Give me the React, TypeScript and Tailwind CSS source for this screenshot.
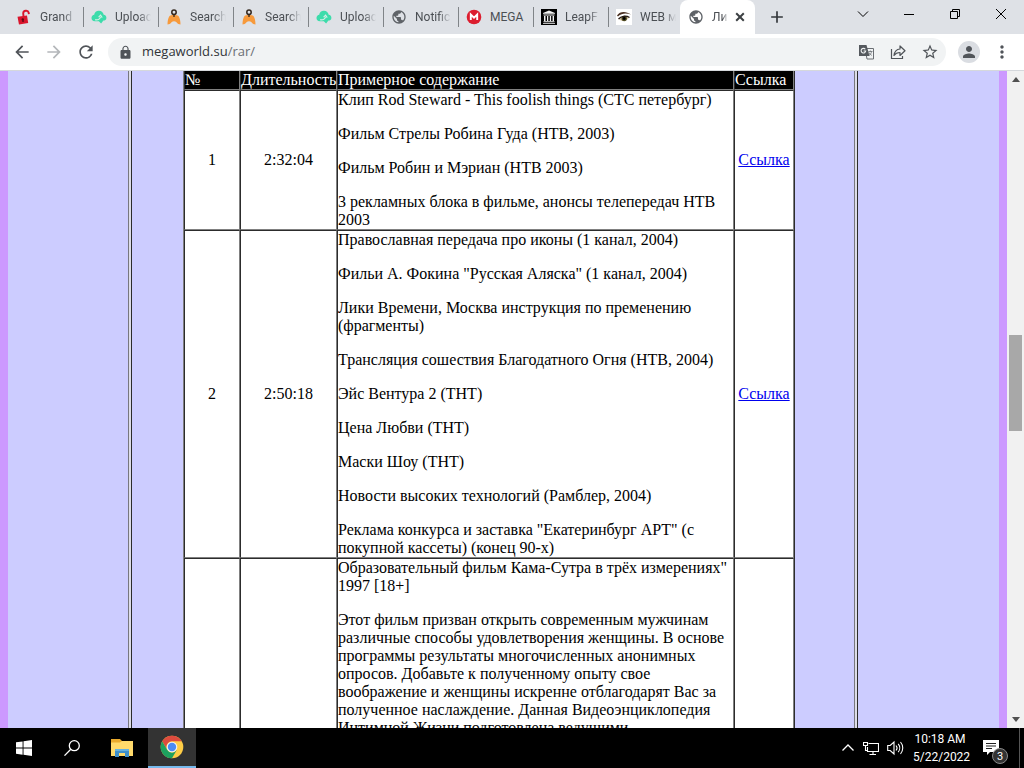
import React from "react";
import {
  MdArrowBack,
  MdArrowForward,
  MdRefresh,
  MdLock,
  MdStarBorder,
  MdPerson,
  MdMoreVert,
  MdPublic,
  MdAdd,
} from "react-icons/md";

const LockIcon = () => (
  <svg viewBox="0 0 16 16" className="h-4 w-4 shrink-0">
    <path d="M7.500 7.500 7.200 4.200C7.300 1.300 12 .8 12.600 3.500l.3 1.700" fill="none" stroke="#d9152c" strokeWidth="1.900" />
    <path d="M1.500 7.800 11 6.600l1.200 7.400-9.200 1.400z" fill="#d9152c" />
    <circle cx="6.800" cy="10.400" r="1.200" fill="#5c0a14" />
    <path d="M6.400 10.600h1l.4 2.400H6.300z" fill="#5c0a14" />
  </svg>
);

const CloudIcon = () => (
  <svg viewBox="0 0 16 16" className="h-4 w-4 shrink-0">
    <path d="M4 12.300C1.600 12.300 0.500 10.800 0.500 9c0-1.800 1.300-3 2.700-3.200C3.600 3 5.800 1.600 8 1.800c2.600.1 4.300 1.700 4.700 3.900 1.700.2 2.800 1.500 2.700 3.200-.1 1.700-1.400 2.700-3 2.700l-2.300 3-2.300-2.300z" fill="#3ddcab" />
    <path d="M4 10.800c3 .3 5-.8 5.500-3M7.600 8.200l2-2 1.600 2.400" fill="none" stroke="#d5efe6" strokeWidth="1.100" />
  </svg>
);

const PersonIcon = () => (
  <svg viewBox="0 0 16 16" className="h-4 w-4 shrink-0">
    <path d="M3.500 7C5 5.600 11 5.600 12.500 7c1.400 2.200 2 5 2 8.500-1.500 0-3-.8-4-2.200-1.500-1.300-3.500-1.300-5 0-1 1.400-2.500 2.200-4 2.200 0-3.500.6-6.300 2-8.500z" fill="#f79a3c" />
    <circle cx="8" cy="3.300" r="2.200" fill="#dee1e6" stroke="#33261c" strokeWidth="1.500" />
    <path d="M8 5.500v2.500" stroke="#33261c" strokeWidth="1.300" />
  </svg>
);

const GlobeIcon = () => <MdPublic className="h-4 w-4 shrink-0 text-[#5f6368]" />;

const MegaIcon = () => (
  <svg viewBox="0 0 16 16" className="h-4 w-4 shrink-0">
    <circle cx="8" cy="8" r="7.300" fill="#dc1d2f" />
    <path d="M4.800 11V5.500L8 8.600l3.200-3.100V11" fill="none" stroke="#fff" strokeWidth="1.900" />
  </svg>
);

const ArchiveIcon = () => (
  <svg viewBox="0 0 16 16" className="h-4 w-4 shrink-0">
    <path d="M0 0h16v16H0z" fill="#000" />
    <path d="M2 4 8 1.500 14 4v.8H2zM2.500 5.500h11v1h-11zM3 7h1.500v5H3zM6 7h1.300v5H6zM8.800 7h1.300v5H8.800zM11.600 7H13v5h-1.400zM2.500 12.300h11v.9h-11zM2 13.900h12v.8H2z" fill="#f3f3f3" />
  </svg>
);

const EyeIcon = () => (
  <svg viewBox="0 0 16 16" className="h-4 w-4 shrink-0">
    <path d="M0 0h16v16H0z" fill="#fff" />
    <path d="M1 6.500C4 2 10 2 15 5.500c-5-1.500-9-1.500-13 2z" fill="#4a3022" />
    <path d="M3 10C5 7 10 6.300 13 8.500c-2 3.500-7 5-10 1.500z" fill="#d9c8a8" />
    <circle cx="8.200" cy="9.500" r="2.700" fill="#4d4821" />
    <circle cx="8.200" cy="9.500" r="1.400" fill="#000" />
    <path d="M2.500 10C5 7 10 6.300 13.500 8.500" fill="none" stroke="#241812" strokeWidth="1.200" />
  </svg>
);

const tabs = [
  { title: "Grand", Icon: LockIcon },
  { title: "Uploac", Icon: CloudIcon },
  { title: "Search", Icon: PersonIcon },
  { title: "Search", Icon: PersonIcon },
  { title: "Uploac", Icon: CloudIcon },
  { title: "Notific", Icon: GlobeIcon },
  { title: "MEGA", Icon: MegaIcon },
  { title: "LeapF", Icon: ArchiveIcon },
  { title: "WEB м", Icon: EyeIcon },
];

const fade = "[mask-image:linear-gradient(to_right,black_65%,transparent)]";

function TabStrip() {
  return (
    <header className="flex h-[34px] shrink-0 bg-[#dee1e6] font-['Roboto',sans-serif] text-xs text-[#4b4f54]">
      <nav className="flex items-center pl-[9px]">
        {tabs.map(({ title, Icon }, i) => (
          <a
            key={i}
            href="#"
            className={
              "flex h-5 w-[75px] items-center gap-2 pl-[7px] " +
              (i < tabs.length - 1 ? "border-r border-[#808488]" : "")
            }
          >
            <Icon />
            <span className={"w-9 shrink-0 whitespace-nowrap " + (title === "MEGA" ? "" : fade)}>{title}</span>
          </a>
        ))}
      </nav>
      <div className="-ml-1 flex w-[75px] items-center rounded-t-lg bg-white pl-2">
        <GlobeIcon />
        <span className={"ml-2 w-4 shrink-0 whitespace-nowrap " + fade}>Ли</span>
        <button aria-label="Close tab" className="ml-1 flex h-4 w-4 items-center justify-center">
          <svg viewBox="0 0 10 10" className="h-[10px] w-[10px]" fill="none" stroke="#3c4043" strokeWidth="2"><path d="m1.200 1.200 7.600 7.600M8.800 1.200 1.200 8.800" /></svg>
        </button>
      </div>
      <button aria-label="New tab" className="ml-3">
        <MdAdd className="h-5 w-5 text-[#33373b]" />
      </button>
      <div className="ml-auto flex pb-[6px] text-black">
        <button aria-label="Search tabs" className="flex w-[46px] items-center justify-center">
          <svg viewBox="0 0 12 12" className="h-3 w-3" fill="none" stroke="currentColor"><path d="M1 3.500 6 8.500l5-5" /></svg>
        </button>
        <button aria-label="Minimize" className="flex w-[46px] items-center justify-center">
          <svg viewBox="0 0 12 12" className="h-3 w-3" fill="none" stroke="currentColor"><path d="M1 6.500h10" /></svg>
        </button>
        <button aria-label="Restore" className="flex w-[46px] items-center justify-center">
          <svg viewBox="0 0 12 12" className="h-3 w-3" fill="none" stroke="currentColor"><path d="M1.500 3.500h7v7h-7zM3.500 3.500v-2h7v7h-2" /></svg>
        </button>
        <button aria-label="Close" className="flex w-[46px] items-center justify-center">
          <svg viewBox="0 0 12 12" className="h-3 w-3" fill="none" stroke="currentColor"><path d="m1 1 10 10M11 1 1 11" /></svg>
        </button>
      </div>
    </header>
  );
}

function Toolbar() {
  return (
    <div className="flex h-[37px] shrink-0 items-center border-b border-[#d5d8dc] bg-white pr-3 pl-3 text-[#505459]">
      <button aria-label="Back" className="mr-3"><MdArrowBack className="h-5 w-5" /></button>
      <button aria-label="Forward" className="mr-3"><MdArrowForward className="h-5 w-5 text-[#b4b7ba]" /></button>
      <button aria-label="Reload" className="mr-3"><MdRefresh className="h-5 w-5" /></button>
      <div className="flex h-7 flex-1 items-center rounded-full bg-[#f1f3f4] pr-[7px] pl-[10px]">
        <MdLock className="h-[15px] w-[15px]" />
        <a href="#" className="ml-[9px] flex-1 text-[13px] text-[#303338]">
          megaworld.su<span className="text-[#6a6e73]">/rar/</span>
        </a>
        <button aria-label="Translate" className="mr-4">
          <svg viewBox="0 0 16 16" className="h-4 w-4">
            <path d="M7 4.500h8.500V15H9z" fill="#f1f3f4" stroke="#6a6e73" />
            <path d="M1 1h7.500l3 11H1z" fill="#55595e" />
            <path d="M7.300 5.300A2.300 2.300 0 1 0 7.700 7H5.600" fill="none" stroke="#f1f3f4" strokeWidth="1.100" />
            <path d="M10.300 7.500h4.200M12.400 6.500v1M13.600 7.500c-.3 1.700-1.300 2.900-2.400 3.700M11 8.500c.5 1.300 1.500 2.200 2.800 2.900" fill="none" stroke="#6a6e73" strokeWidth=".8" />
          </svg>
        </button>
        <button aria-label="Share" className="mr-[15px]">
          <svg viewBox="0 0 16 16" className="h-4 w-4" fill="none" stroke="currentColor" strokeWidth="1.200">
            <path d="M1.500 5v9.500h11V12" />
            <path d="M10 2v3C6.500 5.200 4.500 7.500 4 11.500 5.500 9.300 7.300 8.500 10 8.500v3l5-4.800z" strokeLinejoin="round" />
          </svg>
        </button>
        <button aria-label="Bookmark"><MdStarBorder className="h-[18px] w-[18px]" /></button>
      </div>
      <button aria-label="Profile" className="ml-3 flex h-[22px] w-[22px] items-center justify-center rounded-full bg-[#dadde2]">
        <MdPerson className="h-[18px] w-[18px]" />
      </button>
      <button aria-label="Menu" className="ml-3"><MdMoreVert className="h-5 w-5" /></button>
    </div>
  );
}

const rows = [
  {
    n: "1",
    time: "2:32:04",
    items: [
      "Клип Rod Steward - This foolish things (СТС петербург)",
      "Фильм Стрелы Робина Гуда (НТВ, 2003)",
      "Фильм Робин и Мэриан (НТВ 2003)",
      "3 рекламных блока в фильме, анонсы телепередач НТВ 2003",
    ],
  },
  {
    n: "2",
    time: "2:50:18",
    items: [
      "Православная передача про иконы (1 канал, 2004)",
      "Фильи А. Фокина \"Русская Аляска\" (1 канал, 2004)",
      "Лики Времени, Москва инструкция по пременению (фрагменты)",
      "Трансляция сошествия Благодатного Огня (НТВ, 2004)",
      "Эйс Вентура 2 (ТНТ)",
      "Цена Любви (ТНТ)",
      "Маски Шоу (ТНТ)",
      "Новости высоких технологий (Рамблер, 2004)",
      "Реклама конкурса и заставка \"Екатеринбург АРТ\" (с покупной кассеты) (конец 90-х)",
    ],
  },
  {
    n: "",
    time: "",
    items: [
      "Образовательный фильм Кама-Сутра в трёх измерениях\" 1997 [18+]",
      "Этот фильм призван открыть современным мужчинам различные способы удовлетворения женщины. В основе программы результаты многочисленных анонимных опросов. Добавьте к полученному опыту свое воображение и женщины искренне отблагодарят Вас за полученное наслаждение. Данная Видеоэнциклопедия Интимной Жизни подготовлена ведущими",
    ],
  },
];

const cell = "border border-t-[#2c2c2c] border-r-[#808080] border-b-[#808080] border-l-[#2c2c2c] p-0";
const headCell = "border border-t-0 border-r-[#808080] border-b-[#808080] border-l-[#2c2c2c] p-0 text-left font-normal";

function Listing() {
  return (
    <table className="w-full table-fixed border-separate border-spacing-0 border border-t-0 border-r-[#2c2c2c] border-l-[#808080] bg-white text-base leading-[18px] text-black">
      <colgroup>
        <col className="w-14" />
        <col className="w-[97px]" />
        <col />
        <col className="w-[60px]" />
      </colgroup>
      <thead className="bg-black text-white">
        <tr>
          <th className={headCell}>№</th>
          <th className={headCell}>Длительность</th>
          <th className={headCell}>Примерное содержание</th>
          <th className={headCell}>Ссылка</th>
        </tr>
      </thead>
      <tbody>
        {rows.map((row, i) => (
          <tr key={i}>
            <td className={cell + " text-center"}>{row.n}</td>
            <td className={cell + " text-center"}>{row.time}</td>
            <td className={cell}>
              <div className="flex flex-col gap-4">
                {row.items.map((item) => (
                  <p key={item}>{item}</p>
                ))}
              </div>
            </td>
            <td className={cell + " text-center"}>
              {row.n && <a href="#" className="text-[#0000ee] underline">Ссылка</a>}
            </td>
          </tr>
        ))}
      </tbody>
    </table>
  );
}

function Scrollbar() {
  return (
    <div className="flex w-[17px] shrink-0 flex-col items-center bg-[#f1f1f1] py-1.5">
      <svg viewBox="0 0 8 5" className="h-[5px] w-2"><path d="M0 5 4 0l4 5z" fill="#505050" /></svg>
      <div className="grow-[253]" />
      <div className="h-24 w-[13px] bg-[#a8a8a8]" />
      <div className="grow-[287]" />
      <svg viewBox="0 0 8 5" className="h-[5px] w-2"><path d="M0 0l4 5 4-5z" fill="#505050" /></svg>
    </div>
  );
}

function Taskbar() {
  return (
    <footer className="flex h-10 shrink-0 bg-black font-['Roboto',sans-serif] text-white">
      <button aria-label="Start" className="flex w-12 items-center justify-center">
        <svg viewBox="0 0 16 16" className="h-4 w-4"><path d="M0 2.300 6.600 1.400v6.200H0zM7.500 1.200 16 0v7.600H7.500zM0 8.500h6.600v6.200L0 13.800zM7.500 8.500H16V16l-8.500-1.200z" fill="#fff" /></svg>
      </button>
      <button aria-label="Search" className="flex w-12 items-center justify-center">
        <svg viewBox="0 0 16 16" className="h-4 w-4" fill="none" stroke="#fff" strokeWidth="1.300"><circle cx="10.300" cy="5.700" r="5" /><path d="M6.800 9.300.5 15.600" /></svg>
      </button>
      <button aria-label="File Explorer" className="flex w-[52px] items-center justify-center">
        <svg viewBox="0 0 22 18" className="h-[18px] w-[22px]">
          <path d="M0 0h9l2 2h11v15H0z" fill="#e9aa2d" />
          <path d="M0 3.500h9l2-1.500h11v15H0z" fill="#ffda6b" />
          <path d="M4 18v-8h14v8h-4v-4H8v4z" fill="#3f8fc9" />
          <path d="M4 10h14v2H4z" fill="#65b1df" />
        </svg>
      </button>
      <button aria-label="Chrome" className="flex w-12 items-center justify-center border-b-2 border-[#76b9ed] bg-[#333]">
        <svg viewBox="0 0 24 24" className="h-6 w-6">
          <circle cx="12" cy="12" r="11.300" fill="#ffcd46" />
          <path d="M2.200 6.350A11.300 11.300 0 0 1 21.800 6.350H12A5.650 5.650 0 0 0 7.100 14.800z" fill="#dd4b3e" />
          <path d="M2.200 6.350A11.300 11.300 0 0 0 12 23.300L16.900 14.800A5.650 5.650 0 0 1 7.100 14.800z" fill="#1da15f" />
          <circle cx="12" cy="12" r="5.300" fill="#f2f2f2" />
          <circle cx="12" cy="12" r="4.200" fill="#4b8bf4" />
        </svg>
      </button>
      <div className="ml-auto flex items-center">
        <button aria-label="Show hidden icons" className="mr-2">
          <svg viewBox="0 0 14 14" className="h-[14px] w-[14px]" fill="none" stroke="#fff" strokeWidth="1.300"><path d="M1.500 9.500 7 4l5.500 5.500" /></svg>
        </button>
        <button aria-label="Network" className="mr-2">
          <svg viewBox="0 0 16 16" className="h-4 w-4" fill="none" stroke="#fff" strokeWidth="1.100"><path d="M5.500 3.500h10v8H4.500V7M10 11.500v3M6.500 14.500H13M.5 2.500h4v3h-4zM2.500 5.500v5h2" /></svg>
        </button>
        <button aria-label="Volume" className="mr-[9px]">
          <svg viewBox="0 0 17 16" className="h-4 w-[17px]" fill="none" stroke="#fff" strokeWidth="1.100"><path d="M.7 5.500h2.500L7 2v12l-3.800-3.500H.7zM9 5.500c1.200 1.400 1.200 3.600 0 5M11.200 3.800c2 2.400 2 6 0 8.400M13.500 2c3 3.400 3 8.600 0 12" /></svg>
        </button>
        <time className="w-[54px] text-center text-xs leading-[18px] whitespace-nowrap">
          10:18 AM
          <br />
          5/22/2022
        </time>
        <button aria-label="Notifications" className="relative mr-3 ml-4 h-6 w-6">
          <svg viewBox="0 0 24 24" className="h-6 w-6">
            <path d="M0 4h16v12H7l-3 3v-3H0z" fill="#fff" />
            <path d="M3 7.500h10M3 10h10M3 12.500h6" stroke="#222" />
          </svg>
          <span className="absolute -right-px -bottom-1 flex h-4 w-4 items-center justify-center rounded-full border border-[#8a8a8a] bg-[#333] text-[11px] leading-none">3</span>
        </button>
        <div className="mr-1 h-10 w-px bg-[#555]" />
      </div>
    </footer>
  );
}

export default function App() {
  return (
    <div className="flex h-screen flex-col overflow-hidden bg-white font-['Open_Sans','Noto_Sans',sans-serif]">
      <TabStrip />
      <Toolbar />
      <div className="flex min-h-0 flex-1">
        <main className="flex min-w-0 flex-1 gap-0.5 overflow-hidden border-x-8 border-[#cc99ff] bg-[#dcdce8] font-['Liberation_Serif',serif]">
          <aside className="w-[121px] shrink-0 border-r border-[#77777f] bg-[#ccccff]" />
          <section className="min-w-0 flex-1 border-r border-l border-r-[#77777f] border-l-[#2c2c2c] bg-[#ccccff] pr-[59px] pl-[51px]">
            <Listing />
          </section>
          <aside className="w-[142px] shrink-0 border-l border-[#2c2c2c] bg-[#ccccff]" />
        </main>
        <Scrollbar />
      </div>
      <Taskbar />
    </div>
  );
}
